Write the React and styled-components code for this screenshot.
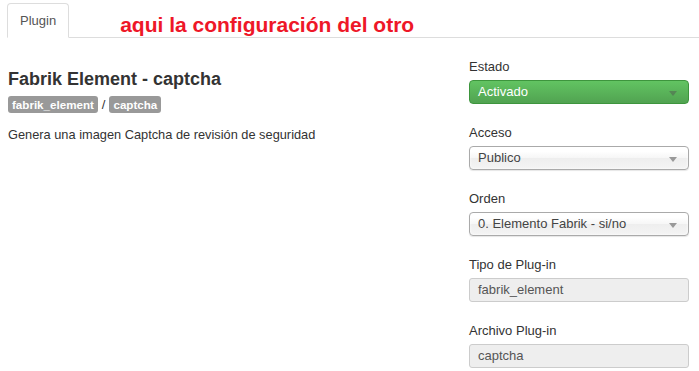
import React from 'react'
import styled, { createGlobalStyle } from 'styled-components'

const GlobalStyle = createGlobalStyle`
  body {
    margin: 0;
    background: #fff;
    font-family: "Liberation Sans", Arial, sans-serif;
    font-size: 13px;
    color: #333;
  }
`

const Page = styled.div`
  width: 699px;
  height: 371px;
  overflow: hidden;
`

const TabBar = styled.div`
  display: flex;
  align-items: flex-end;
  margin: 2px 0 0 7px;
  height: 35px;
  border-bottom: 1px solid #ddd;
`

const Tab = styled.div`
  height: 35px;
  box-sizing: border-box;
  padding: 0 12px;
  line-height: 34px;
  color: #555;
  background: #fff;
  border: 1px solid #ddd;
  border-bottom-color: #fff;
  border-radius: 4px 4px 0 0;
  margin-bottom: -1px;
`

const Note = styled.span`
  align-self: flex-end;
  margin: 0 0 -1px 51px;
  line-height: 26px;
  font-size: 21px;
  font-weight: bold;
  color: #ee1728;
`

const Body = styled.div`
  display: flex;
  justify-content: space-between;
  padding: 0 10px 0 8px;
`

const Main = styled.div`
  padding-top: 30px;
`

const Title = styled.h2`
  margin: 0;
  font-size: 18px;
  line-height: 22px;
  font-weight: bold;
  color: #333;
`

const Badges = styled.div`
  display: flex;
  align-items: center;
  gap: 4px;
  margin-top: 6px;
`

const Badge = styled.span`
  display: inline-block;
  padding: 0 4px;
  line-height: 17px;
  font-size: 11.6px;
  font-weight: bold;
  color: #fff;
  background: #999;
  border-radius: 3px;
`

const Desc = styled.p`
  margin: 13px 0 0;
  line-height: 18px;
  font-size: 12.8px;
`

const Side = styled.div`
  width: 220px;
  padding-top: 20px;
  display: flex;
  flex-direction: column;
  gap: 20px;
`

const Field = styled.div`
  display: flex;
  flex-direction: column;
`

const Label = styled.label`
  line-height: 18px;
  margin-bottom: 4px;
  color: #333;
`

const Select = styled.div`
  position: relative;
  height: 24px;
  box-sizing: border-box;
  padding-left: 8px;
  line-height: 22px;
  border-radius: 4px;
  border: 1px solid ${p => (p.$on ? '#3d953d' : '#aaa')};
  color: ${p => (p.$on ? '#fff' : '#444')};
  background: ${p =>
    p.$on
      ? 'linear-gradient(#62c462, #51a351)'
      : 'linear-gradient(#fff 20%, #f6f6f6 50%, #eee 52%, #f4f4f4 100%)'};
  box-shadow: ${p => (p.$on ? 'none' : '0 0 3px #fff inset, 0 1px 1px rgba(0,0,0,0.1)')};
`

const Arrow = styled.span`
  position: absolute;
  right: 11px;
  top: 10px;
  width: 0;
  height: 0;
  border-left: 4px solid transparent;
  border-right: 4px solid transparent;
  border-top: 5px solid ${p => (p.$on ? 'rgba(80,80,80,0.45)' : '#999')};
`

const ReadOnly = styled.div`
  height: 24px;
  box-sizing: border-box;
  padding-left: 8px;
  line-height: 22px;
  color: #555;
  background: #eee;
  border: 1px solid #ccc;
  border-radius: 3px;
`

const fields = [
  { label: 'Estado', value: 'Activado', kind: 'on' },
  { label: 'Acceso', value: 'Publico', kind: 'select' },
  { label: 'Orden', value: '0. Elemento Fabrik - si/no', kind: 'select' },
  { label: 'Tipo de Plug-in', value: 'fabrik_element', kind: 'ro' },
  { label: 'Archivo Plug-in', value: 'captcha', kind: 'ro' },
]

export default function App() {
  return (
    <Page>
      <GlobalStyle />
      <TabBar>
        <Tab>Plugin</Tab>
        <Note>aqui la configuración del otro</Note>
      </TabBar>
      <Body>
        <Main>
          <Title>Fabrik Element - captcha</Title>
          <Badges>
            <Badge>fabrik_element</Badge>
            <span>/</span>
            <Badge>captcha</Badge>
          </Badges>
          <Desc>Genera una imagen Captcha de revisión de seguridad</Desc>
        </Main>
        <Side>
          {fields.map(f => (
            <Field key={f.label}>
              <Label>{f.label}</Label>
              {f.kind === 'ro' ? (
                <ReadOnly>{f.value}</ReadOnly>
              ) : (
                <Select $on={f.kind === 'on'}>
                  {f.value}
                  <Arrow $on={f.kind === 'on'} />
                </Select>
              )}
            </Field>
          ))}
        </Side>
      </Body>
    </Page>
  )
}
